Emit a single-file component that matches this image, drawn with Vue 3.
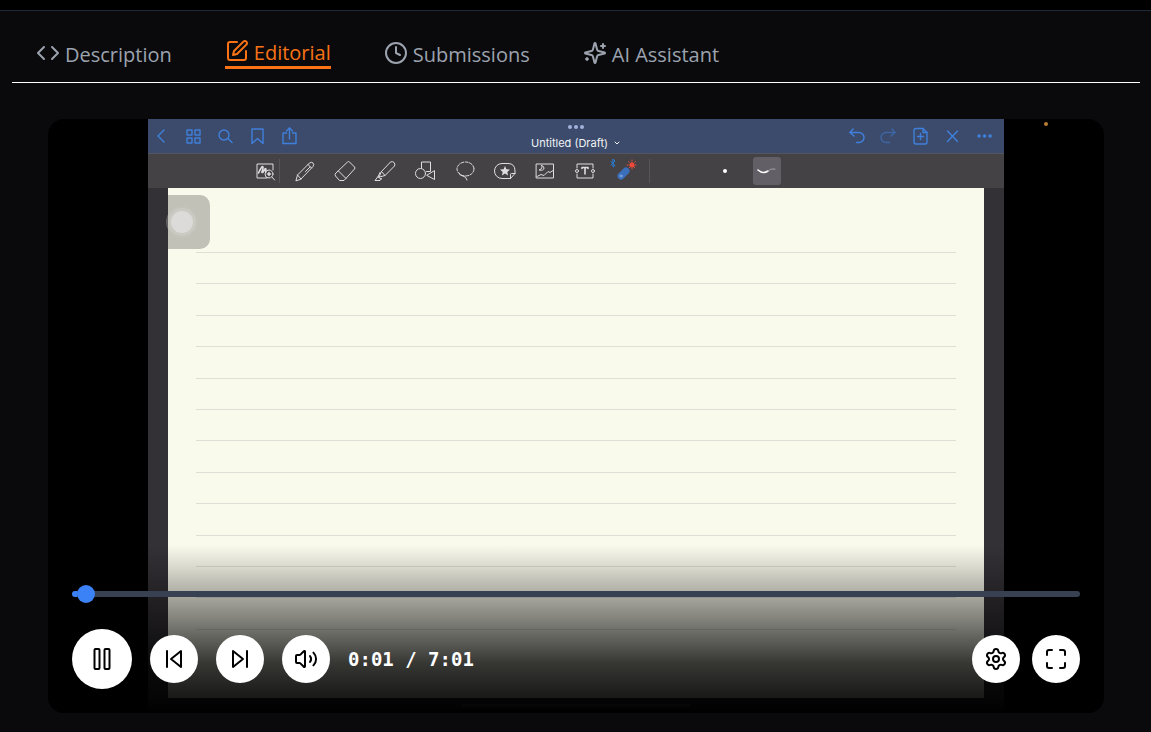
<script setup>
import { ref } from 'vue'

const position = ref(2)

const tabs = [
  { label: 'Description', icon: ['m16 18 6-6-6-6', 'm8 6-6 6 6 6'] },
  {
    label: 'Editorial',
    active: true,
    icon: [
      'M12 3H5a2 2 0 0 0-2 2v14a2 2 0 0 0 2 2h14a2 2 0 0 0 2-2v-7',
      'M18.375 2.625a2.121 2.121 0 1 1 3 3L12 15l-4 1 1-4Z',
    ],
  },
  {
    label: 'Submissions',
    icon: ['M12 2a10 10 0 1 0 0 20a10 10 0 1 0 0-20', 'M12 6v6l4 2'],
  },
  {
    label: 'AI Assistant',
    icon: [
      'M9.937 15.500A2 2 0 0 0 8.500 14.063l-6.135-1.582a.5.5 0 0 1 0-.962L8.500 9.936A2 2 0 0 0 9.937 8.500l1.582-6.135a.5.5 0 0 1 .963 0L14.063 8.500A2 2 0 0 0 15.500 9.937l6.135 1.581a.5.5 0 0 1 0 .964L15.500 14.063a2 2 0 0 0-1.437 1.437l-1.582 6.135a.5.5 0 0 1-.963 0z',
      'M20 3v4',
      'M22 5h-4',
      'M4 17v2',
      'M5 18H3',
    ],
  },
]

const leftActions = [
  { name: 'Back', d: ['M13 4 7 10l6 6'] },
  { name: 'Pages', d: ['M4 4h5v5H4z', 'M12 4h5v5h-5z', 'M4 12h5v5H4z', 'M12 12h5v5h-5z'] },
  { name: 'Search', d: ['M9 4a5 5 0 1 0 0 10a5 5 0 1 0 0-10', 'm13 12.500 4 4'] },
  { name: 'Bookmark', d: ['M5 3h11v14.500l-5.500-5L5 17.500z'] },
  { name: 'Share', d: ['M7.500 7H4v10.500h13V7h-3.500', 'M10.500 13V2', 'M7.500 5l3-3 3 3'] },
]

const rightActions = [
  { name: 'Undo', d: ['M7 3 4 6.500 8 10', 'M4 6.500h9a4 4 0 0 1 0 10H10.500'] },
  { name: 'Redo', dim: true, d: ['m14 3 3 3.500-4 3.500', 'M17 6.500H8a4 4 0 0 0 0 10h3.500'] },
  { name: 'Add page', d: ['M6 2.500h7l4 4V16q0 2-2 2H6q-2 0-2-2V4.500q0-2 2-2', 'M13 2.500v4h4', 'M10.500 7.500v6', 'M7.500 10.500h6'] },
  { name: 'Close', d: ['m5.500 5 10 10.500', 'M15.500 5l-10 10.500'] },
  { name: 'More', d: ['M5 10h0.100', 'M10.500 10h0.100', 'M16 10h0.100'], bold: true },
]
</script>

<template>
  <main class="panel">
    <nav class="tabs" aria-label="Problem sections">
      <a v-for="tab in tabs" :key="tab.label" href="#" class="tab" :class="{ active: tab.active }">
        <svg class="tab-icon" viewBox="0 0 24 24" aria-hidden="true">
          <path v-for="d in tab.icon" :key="d" :d="d" />
        </svg>
        <span>{{ tab.label }}</span>
      </a>
    </nav>

    <section class="player" aria-label="Editorial video">
      <div class="frame">
        <header class="app-bar">
          <div class="actions">
            <svg v-for="a in leftActions" :key="a.name" class="action" viewBox="0 0 21 21">
              <path v-for="d in a.d" :key="d" :d="d" />
            </svg>
          </div>
          <div class="doc">
            <svg class="dots" viewBox="0 0 18 6"><circle cx="3" cy="3" r="2" /><circle cx="9" cy="3" r="2" /><circle cx="15" cy="3" r="2" /></svg>
            <div class="doc-title">
              <span>Untitled (Draft)</span>
              <svg class="chevron" viewBox="0 0 8 8"><path d="m2 3 2 2 2-2" /></svg>
            </div>
          </div>
          <div class="actions">
            <svg v-for="a in rightActions" :key="a.name" class="action" :class="{ dim: a.dim, bold: a.bold }" viewBox="0 0 21 21">
              <path v-for="d in a.d" :key="d" :d="d" />
            </svg>
          </div>
        </header>

        <div class="tools">
          <svg class="tool" viewBox="0 0 22 22">
            <path d="M19 10V4H3v14h10" /><path class="thick" d="M4.500 13C6.500 8 9 5 9 7.500S7 13 8.500 12.500s2-4 3-4-.5 3 .5 3.500" />
            <circle cx="15" cy="14" r="4" /><path class="thick" d="M15 12.500v3M13.500 14h3" /><path d="m18 17 2.500 3" />
          </svg>
          <i class="rule"></i>
          <svg class="tool" viewBox="0 0 22 22">
            <path d="M2 20.500 3.500 15 15.500 3q2-1.500 3.500 0t0 3.500L7 19zM3.500 15 7 19M14 4.500 17.500 8M16 7l-4.500 4.500" />
          </svg>
          <svg class="tool" viewBox="0 0 22 22">
            <path d="M1.500 13.500 13.500 2q1-1 2 0l5 5q1 1 0 2L10 20.500H5.500L1.500 16q-1-1.500 0-2.500M4.500 11l7.500 7.500" />
          </svg>
          <svg class="tool" viewBox="0 0 22 22">
            <path d="M7.500 11.500 16.500 2q2-1 3.500.5t.5 3.500L11 15.500l-5.500 1.500zM7.500 11.500l3.500 4M6 12.500 4 17l3 2M4 16.500l-3 4h5l1.500-2" />
          </svg>
          <svg class="tool" viewBox="0 0 22 22">
            <path d="M7.500 8V2h9v9.500h-4M20.500 11v8.500L13 15.500z" /><circle cx="6.500" cy="13.500" r="5" />
          </svg>
          <svg class="tool" viewBox="0 0 22 22">
            <ellipse class="dash" cx="11.500" cy="9" rx="8.500" ry="7" /><path d="M5 13q1 3 4 3 3 .5 4 4" />
          </svg>
          <svg class="tool" viewBox="0 0 22 22">
            <path d="M16.500 18.500H8a7.500 7.500 0 0 1 0-15h6q7 0 7 7.500v2.500l-4.500 5v-4q0-1 1-1h3.500" />
            <path class="solid" d="m11 6 1.400 3.300 3.600.3-2.700 2.300.8 3.600L11 13.600l-3.100 1.900.8-3.600L6 9.600l3.600-.3z" />
          </svg>
          <svg class="tool" viewBox="0 0 22 22">
            <path d="M2.500 4h17v14h-17zM3 16.500l4-2 3 1 4-4 2 1 3-2M7.500 5.500q2 3-2.500 4.500 5 1 5-2 0-2-2.500-2.500" />
          </svg>
          <svg class="tool" viewBox="0 0 22 22">
            <path d="M3 8V4h16v4M3 14v4h16v-4" /><circle cx="3" cy="11" r="1.500" /><circle cx="19" cy="11" r="1.500" />
            <path class="thick" d="M8 8.500V7.500h6v1M11 7.500V14" />
          </svg>
          <svg class="tool laser" viewBox="0 0 30 26">
            <path class="bluetooth" d="M2 3.500l4 4L4 9V1l2 2-4 4" />
            <path class="beam" d="M23 2v10M18 7h10M19.500 3.500l7 7M26.500 3.500l-7 7" /><circle class="glow" cx="23" cy="7" r="2.500" />
            <path class="body" d="m12 18 5-5" /><circle class="button" cx="12" cy="18" r="1" />
          </svg>
          <i class="rule"></i>
          <i class="pen-size"></i>
          <span class="stroke-style">
            <svg viewBox="0 0 28 28"><path class="stroke-main" d="M5 13q5 4.500 10 1" /><path class="stroke-tail" d="M15 14q3-3 7-2" /></svg>
          </span>
        </div>

        <div class="desk">
          <div class="paper">
            <div class="lines"><hr v-for="n in 13" :key="n" /></div>
            <div class="assist"><i></i></div>
          </div>
          <div class="home"></div>
        </div>
      </div>
      <i class="recording"></i>

      <div class="controls">
        <input v-model="position" class="seek" type="range" min="0" max="421" aria-label="Seek" />
        <div class="buttons">
          <button class="round large" aria-label="Pause">
            <svg viewBox="0 0 24 24"><rect x="14.500" y="2" width="5" height="20" rx="1" /><rect x="4.500" y="2" width="5" height="20" rx="1" /></svg>
          </button>
          <button class="round" aria-label="Previous">
            <svg viewBox="0 0 24 24"><path d="M19 20 9 12l10-8zM5 4v16" /></svg>
          </button>
          <button class="round" aria-label="Next">
            <svg viewBox="0 0 24 24"><path d="m5 4 10 8-10 8zM19 4v16" /></svg>
          </button>
          <button class="round" aria-label="Mute">
            <svg viewBox="0 0 24 24"><path d="M11 4.700a.7.7 0 0 0-1.200-.5L6.400 7.600A1.400 1.400 0 0 1 5.400 8H3a1 1 0 0 0-1 1v6a1 1 0 0 0 1 1h2.400a1.400 1.400 0 0 1 1 .4l3.400 3.400a.7.7 0 0 0 1.200-.5zM16 9a5 5 0 0 1 0 6M19.400 5.600a9 9 0 0 1 0 12.800" /></svg>
          </button>
          <span class="time">0:01 / 7:01</span>
          <button class="round settings" aria-label="Settings">
            <svg viewBox="0 0 24 24"><path d="M9.671 4.136a2.340 2.340 0 0 1 4.659 0 2.340 2.340 0 0 0 3.319 1.915 2.340 2.340 0 0 1 2.330 4.033 2.340 2.340 0 0 0 0 3.831 2.340 2.340 0 0 1-2.330 4.033 2.340 2.340 0 0 0-3.319 1.915 2.340 2.340 0 0 1-4.659 0 2.340 2.340 0 0 0-3.320-1.915 2.340 2.340 0 0 1-2.330-4.033 2.340 2.340 0 0 0 0-3.831A2.340 2.340 0 0 1 6.350 6.051a2.340 2.340 0 0 0 3.319-1.915" /><circle cx="12" cy="12" r="3" /></svg>
          </button>
          <button class="round" aria-label="Full screen">
            <svg viewBox="0 0 24 24"><path d="M8 3H5a2 2 0 0 0-2 2v3M21 8V5a2 2 0 0 0-2-2h-3M3 16v3a2 2 0 0 0 2 2h3M16 21h3a2 2 0 0 0 2-2v-3" /></svg>
          </button>
        </div>
      </div>
    </section>
  </main>
</template>

<style>
body {
  margin: 0;
  background: #000;
}
</style>

<style scoped>
* {
  box-sizing: border-box;
}
.panel {
  margin: 10px 0 0;
  padding: 0 11px 19px 12px;
  border-top: 1px solid #1f2937;
  background: #0a0a0c;
  font-family: "Open Sans", "Noto Sans", sans-serif;
}
svg {
  display: block;
  flex: none;
  fill: none;
  stroke: currentColor;
  stroke-linecap: round;
  stroke-linejoin: round;
}
.tabs {
  display: flex;
  align-items: center;
  gap: 53px;
  height: 72px;
  padding: 14px 24px 0;
  border-bottom: 1px solid #fff;
}
.tab {
  display: flex;
  align-items: center;
  gap: 5px;
  color: #9ca3af;
  font-size: 20px;
  line-height: 28px;
  text-decoration: none;
}
.tab.active {
  color: #f97316;
  border-bottom: 3px solid #f97316;
}
.tab span {
  padding-top: 2px;
  line-height: 26px;
}
.tab-icon {
  width: 24px;
  height: 24px;
  margin-bottom: 2px;
  stroke-width: 2;
}
.player {
  position: relative;
  margin: 36px 36px 0;
  aspect-ratio: 16 / 9;
  overflow: hidden;
  border-radius: 16px;
  background: #000;
}
.frame {
  display: flex;
  flex-direction: column;
  width: 81%;
  height: 100%;
  margin: 0 auto;
}
.app-bar {
  display: flex;
  justify-content: space-between;
  height: 35px;
  padding: 0 9px 0 3px;
  border-bottom: 1px solid #53565f;
  background: #3c4b6b;
}
.actions {
  display: flex;
  align-items: center;
  gap: 11px;
  color: #3f80dc;
}
.action {
  width: 21px;
  height: 21px;
  stroke-width: 1.4;
}
.dim {
  opacity: 0.5;
}
.bold {
  stroke-width: 3.5;
}
.doc {
  display: flex;
  flex-direction: column;
  align-items: center;
  padding: 5px 0 0 6px;
  color: #f1f3f7;
  font-family: Inter, sans-serif;
  font-size: 11px;
  line-height: 14px;
}
.dots {
  width: 18px;
  height: 6px;
  fill: #a0b2dc;
  stroke: none;
}
.doc-title {
  display: flex;
  align-items: center;
  gap: 5px;
  padding: 6px 0 0;
}
.chevron {
  width: 8px;
  height: 8px;
}
.tools {
  display: flex;
  align-items: center;
  height: 34px;
  padding-left: 106px;
  background: #454246;
  color: #dedde0;
}
.tool {
  width: 22px;
  height: 22px;
  margin-right: 18px;
  stroke-width: 1;
}
.thick {
  stroke-width: 1.6;
}
.solid {
  fill: currentColor;
  stroke: none;
}
.dash {
  stroke-dasharray: 3 1.500;
}
.rule {
  width: 1px;
  height: 24px;
  margin: 0 14px 0 -15px;
  background: #57545a;
}
.laser {
  width: 30px;
  height: 26px;
  margin: 0 25px 0 -5px;
}
.bluetooth {
  stroke: #267fda;
}
.beam {
  stroke: #d94d3c;
  stroke-dasharray: 1 1;
}
.glow {
  fill: #ed4838;
  stroke: none;
}
.body {
  stroke: #3c6fba;
  stroke-width: 7;
}
.button {
  stroke: #7faeea;
}
.pen-size {
  width: 4px;
  height: 4px;
  margin: 0 26px 0 59px;
  border-radius: 50%;
  background: #fff;
}
.stroke-style {
  width: 28px;
  height: 28px;
  border-radius: 3px;
  background: #626066;
}
.stroke-main {
  stroke: #fff;
  stroke-width: 1.6;
}
.stroke-tail {
  stroke: #a5a3a8;
}
.desk {
  flex: 1;
  padding: 0 20px;
  background: #343136;
}
.paper {
  position: relative;
  height: 510px;
  padding: 64px 28px 0;
  background: #f9f9ec;
}
.lines {
  display: flex;
  flex-direction: column;
  justify-content: space-between;
  height: 378px;
}
.lines hr {
  width: 100%;
  height: 1px;
  margin: 0;
  border: 0;
  background: #dfdfd7;
}
.assist {
  position: absolute;
  top: 7px;
  left: 0;
  display: flex;
  align-items: center;
  width: 42px;
  height: 54px;
  border-radius: 0 10px 10px 0;
  background: #c2c1b8;
}
.assist i {
  width: 22px;
  height: 22px;
  margin-left: 3px;
  border-radius: 50%;
  background: #dddbd9;
  box-shadow: 0 0 0 3px #cac9c2, 0 0 0 5px rgba(202, 201, 196, 0.3);
}
.home {
  width: 230px;
  height: 3px;
  margin: 6px auto 0;
  border-radius: 2px;
  background: #777;
}
.recording {
  position: absolute;
  top: 3px;
  right: 56px;
  width: 4px;
  height: 4px;
  border-radius: 50%;
  background: #b97c35;
}
.controls {
  position: absolute;
  inset: auto 0 0;
  padding: 40px 24px 24px;
  background: linear-gradient(to top, #000 0, rgba(0, 0, 0, 0.9) 15px, rgba(0, 0, 0, 0.78) 50px, rgba(0, 0, 0, 0.5) 90px, rgba(0, 0, 0, 0.34) 115px, rgba(0, 0, 0, 0.13) 146px, transparent);
}
.seek {
  display: block;
  width: 100%;
  height: 18px;
  margin: 0;
  appearance: none;
  background: transparent;
}
.seek::-webkit-slider-runnable-track {
  height: 6px;
  border-radius: 3px;
  background: linear-gradient(to right, #3b82f6 5px, #374151 5px);
}
.seek::-webkit-slider-thumb {
  appearance: none;
  width: 18px;
  height: 18px;
  margin-top: -6px;
  border-radius: 50%;
  background: #3b82f6;
}
.buttons {
  display: flex;
  align-items: center;
  gap: 18px;
  margin-top: 26px;
}
.round {
  display: flex;
  flex: none;
  align-items: center;
  justify-content: center;
  width: 48px;
  height: 48px;
  padding: 0;
  border: 0;
  border-radius: 50%;
  background: #fff;
  color: #000;
}
.round svg {
  width: 24px;
  height: 24px;
  stroke-width: 2;
}
.large {
  width: 60px;
  height: 60px;
}
.time {
  color: #fff;
  font: bold 19px/28px "DejaVu Sans Mono", monospace;
}
.settings {
  margin: 0 -6px 0 auto;
}
</style>
